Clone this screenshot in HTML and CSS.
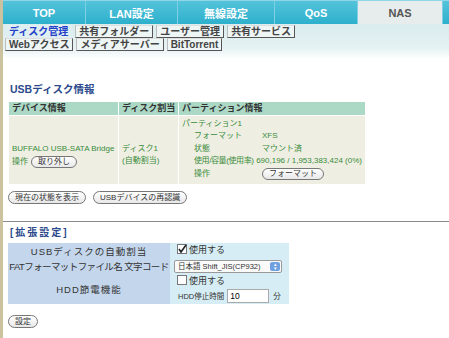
FILE: index.html
```html
<!DOCTYPE html>
<html lang="ja">
<head>
    <meta charset="utf-8">
    <title>NAS - ディスク管理</title>
    <link rel="stylesheet" href="styles.css">
</head>
<body>
    <div class="page">
        <div class="nav">
            <div class="tab tab-top">TOP</div>
            <div class="tab tab-lan">LAN設定</div>
            <div class="tab tab-wlan">無線設定</div>
            <div class="tab tab-qos">QoS</div>
            <div class="tab tab-nas active">NAS</div>
        </div>

        <div class="subnav">
            <div class="subrow">
                <span class="sub current">ディスク管理</span>
                <span class="sub">共有フォルダー</span>
                <span class="sub">ユーザー管理</span>
                <span class="sub">共有サービス</span>
            </div>
            <div class="subrow">
                <span class="sub">Webアクセス</span>
                <span class="sub">メディアサーバー</span>
                <span class="sub">BitTorrent</span>
            </div>
        </div>

        <div class="content">
            <h2 class="section-title">USBディスク情報</h2>
            <table class="disk-table">
                <colgroup>
                    <col class="col-dev">
                    <col class="col-assign">
                    <col class="col-part">
                </colgroup>
                <tr>
                    <th>デバイス情報</th>
                    <th>ディスク割当</th>
                    <th>パーティション情報</th>
                </tr>
                <tr>
                    <td class="mid-cell">
                        <div>BUFFALO USB-SATA Bridge</div>
                        <div class="op-line">操作 <button class="pill">取り外し</button></div>
                    </td>
                    <td class="mid-cell">
                        <div>ディスク1</div>
                        <div>(自動割当)</div>
                    </td>
                    <td class="part-cell">
                        <div class="part-name">パーティション1</div>
                        <div class="part-row"><span class="part-label">フォーマット</span><span>XFS</span></div>
                        <div class="part-row"><span class="part-label">状態</span><span>マウント済</span></div>
                        <div class="part-row"><span class="part-label tight">使用/容量(使用率)</span><span>690,196 / 1,953,383,424 (0%)</span></div>
                        <div class="part-row"><span class="part-label">操作</span><span><button class="pill">フォーマット</button></span></div>
                    </td>
                </tr>
            </table>

            <div class="actions">
                <button class="pill">現在の状態を表示</button>
                <button class="pill">USBデバイスの再認識</button>
            </div>
        </div>

        <hr class="divider">

        <div class="content">
            <h2 class="section-title ext">[拡張設定]</h2>
            <table class="ext-table">
                <tr class="row-auto">
                    <th>USBディスクの自動割当</th>
                    <td><span class="check"><svg width="10" height="10" viewBox="0 0 10 10"><rect x="0.5" y="0.5" width="9" height="9" fill="#fff" stroke="#777"/><path d="M2 5 L4 8 L9 1" fill="none" stroke="#222" stroke-width="1.6"/></svg></span>使用する</td>
                </tr>
                <tr class="row-fat">
                    <th class="tight">FATフォーマットファイル名 文字コード</th>
                    <td>
                        <div class="select">
                            <span class="select-text">日本語 Shift_JIS(CP932)</span>
                            <span class="select-arrow">&#9652;<br>&#9662;</span>
                        </div>
                    </td>
                </tr>
                <tr class="row-hdd">
                    <th>HDD節電機能</th>
                    <td>
                        <div><span class="check"><svg width="10" height="10" viewBox="0 0 10 10"><rect x="0.5" y="0.5" width="9" height="9" fill="#fff" stroke="#777"/></svg></span>使用する</div>
                        <div class="stop-line">HDD停止時間 <input class="minutes" type="text" value="10"> 分</div>
                    </td>
                </tr>
            </table>

            <div class="actions last">
                <button class="pill">設定</button>
            </div>
        </div>
    </div>
</body>
</html>
```

FILE: styles.css
```css
body {
    margin: 0;
    background-color: #ffffff;
    font-family: "Liberation Sans", "Noto Sans CJK JP", sans-serif;
    color: #333;
    overflow: hidden;
}
.page {
    border-left: 3px solid #cbc3a0;
    height: 338px;
}
.nav {
    display: flex;
    height: 23px;
    border-top: 1px solid #8fd6e6;
    background: linear-gradient(#54c3db, #2db0cc);
}
.tab {
    box-sizing: border-box;
    display: flex;
    align-items: center;
    justify-content: center;
    color: #ffffff;
    font-weight: bold;
    font-size: 11px;
    border-right: 1px solid #7fd0e2;
}
.tab-top { width: 83px; }
.tab-lan { width: 92px; }
.tab-wlan { width: 97px; }
.tab-qos { width: 83px; }
.tab-nas { width: 85px; }
.tab.active {
    background: #e7eded;
    color: #555;
}
.subnav {
    background: linear-gradient(#d9ecee, #e6f2f3 70%, #ffffff);
    padding: 1px 0 8px 2px;
}
.subrow {
    display: flex;
    gap: 3px;
    height: 13px;
}
.sub {
    font-size: 10px;
    font-weight: bold;
    color: #444;
    padding: 0 3px;
    line-height: 11px;
    height: 11px;
    white-space: nowrap;
    background: #eef5f5;
    border-right: 1px solid #555;
    border-bottom: 1px solid #555;
    border-left: 1px solid #bbb;
    border-top: 1px solid #ddd;
}
.sub.current {
    color: #2340c8;
    background: #dfeef0;
    border-color: #dfeef0;
}
.content {
    padding: 0 0 0 5px;
}
.section-title {
    margin: 23px 0 6px 2px;
    font-size: 10.5px;
    line-height: 14px;
    color: #2c4a8c;
}
.section-title.ext {
    margin: 4px 0 3px 2px;
    font-size: 10px;
    letter-spacing: 2px;
}
.disk-table {
    border-collapse: collapse;
    table-layout: fixed;
    width: 357px;
    font-size: 8px;
    white-space: nowrap;
}
.col-dev { width: 110px; }
.col-assign { width: 60px; }
.col-part { width: 187px; }
.disk-table th {
    background: #abd9c5;
    color: #333;
    font-size: 9px;
    text-align: left;
    padding: 0 3px;
    height: 13px;
    line-height: 13px;
    border: 1px solid #ffffff;
    border-top: none;
}
.disk-table td {
    background: #eeeee3;
    color: #3a8c3a;
    padding: 2px 3px;
    line-height: 12px;
    height: 64px;
    border: 1px solid #ffffff;
}
.disk-table td.mid-cell {
    vertical-align: top;
    padding-top: 27px;
    height: 39px;
}
.disk-table td.part-cell {
    vertical-align: top;
}
.part-name {
    height: 12px;
}
.part-row {
    display: flex;
    padding-left: 12px;
    height: 12.6px;
    align-items: center;
}
.part-label {
    width: 68px;
}
.part-label.tight {
    letter-spacing: -0.4px;
}
.op-line {
    display: flex;
    align-items: center;
    gap: 3px;
    margin-top: 1px;
}
.pill {
    font-family: "Liberation Sans", "Noto Sans CJK JP", sans-serif;
    font-size: 8px;
    color: #333;
    background: linear-gradient(#ffffff, #e8e8e8);
    border: 1px solid #777;
    border-radius: 7px;
    padding: 0 6px;
    height: 12px;
    line-height: 10px;
    white-space: nowrap;
}
.actions {
    display: flex;
    gap: 7px;
    margin-top: 6px;
}
.actions .pill {
    height: 13px;
}
.actions.last {
    margin-top: 11px;
}
.divider {
    border: none;
    border-top: 1px solid #8a8a8a;
    margin: 17px 0 0 0;
}
.ext-table {
    border-collapse: collapse;
    table-layout: fixed;
    width: 281px;
    white-space: nowrap;
}
.ext-table th {
    background: #c3d6ec;
    font-weight: normal;
    font-size: 9.5px;
    letter-spacing: 1px;
    color: #333;
    width: 162px;
    padding: 0;
    text-align: center;
}
.ext-table th.tight {
    letter-spacing: -0.6px;
}
.ext-table td {
    background: #d6edf5;
    color: #333;
    padding: 0 4px;
    font-size: 9px;
    line-height: 11px;
}
.row-auto th { height: 15px; }
.row-fat th { height: 16px; }
.row-hdd th { height: 30px; }
.check {
    display: inline-block;
    vertical-align: -1px;
    margin: 0 2px 0 3px;
}
.select {
    display: flex;
    align-items: center;
    width: 106px;
    height: 11px;
    border: 1px solid #999;
    border-radius: 2px;
    background: #fafafa;
    font-size: 7.5px;
}
.select-text {
    flex: 1;
    padding-left: 3px;
}
.select-arrow {
    width: 10px;
    height: 9px;
    margin-right: 1px;
    border-radius: 2px;
    background: #6fa0e0;
    color: #fff;
    font-size: 5px;
    line-height: 4.5px;
    text-align: center;
}
.stop-line {
    display: flex;
    align-items: center;
    gap: 1px;
    font-size: 7.5px;
    margin: 1px 0 0 4px;
}
.minutes {
    width: 36px;
    height: 12px;
    font-size: 8.5px;
    border: 1px solid #aaa;
    padding: 0 2px;
    margin: 0 3px 0 2px;
}
```
